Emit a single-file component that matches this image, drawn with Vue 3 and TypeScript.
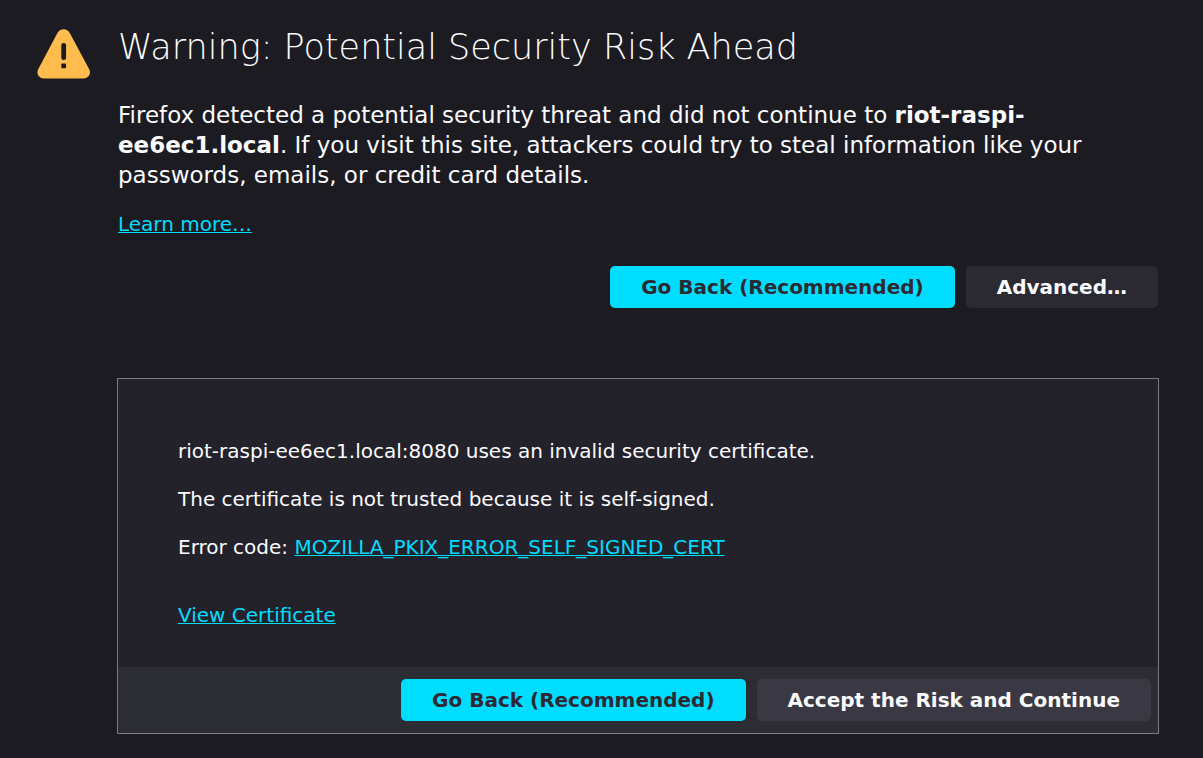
<script setup lang="ts">
const host = 'riot-raspi-ee6ec1.local'
const port = 8080
const errorCode = 'MOZILLA_PKIX_ERROR_SELF_SIGNED_CERT'
</script>

<template>
  <main class="page">
    <svg class="warning-icon" viewBox="0 0 54 50" aria-hidden="true">
      <path
        fill="#ffbd4f"
        d="M20.3 4.2C23 -1.2 30.2 -1.2 32.9 4.2L52.2 40.2C54.4 44.8 51.4 49.5 46.6 49.5H6.8C2 49.5 -1 44.8 1.2 40.2Z"
      />
      <rect x="24.3" y="14" width="4.8" height="17" rx="2.2" fill="#1c1b22" />
      <rect x="24.3" y="34.6" width="4.8" height="4.6" rx="1" fill="#1c1b22" />
    </svg>
    <div class="content">
      <h1>Warning: Potential Security Risk Ahead</h1>
      <p class="intro">
        Firefox detected a potential security threat and did not continue to <b>{{ host }}</b>. If you
        visit this site, attackers could try to steal information like your passwords, emails, or
        credit card details.
      </p>
      <p class="learn"><a href="#">Learn more…</a></p>
      <div class="buttons">
        <button type="button" class="primary">Go Back (Recommended)</button>
        <button type="button">Advanced…</button>
      </div>
      <section class="panel">
        <div class="details">
          <p>{{ host }}:{{ port }} uses an invalid security certificate.</p>
          <p>The certificate is not trusted because it is self-signed.</p>
          <p>Error code: <a href="#">{{ errorCode }}</a></p>
          <p class="certificate"><a href="#">View Certificate</a></p>
        </div>
        <div class="buttons panel-buttons">
          <button type="button" class="primary">Go Back (Recommended)</button>
          <button type="button">Accept the Risk and Continue</button>
        </div>
      </section>
    </div>
  </main>
</template>

<style>
body {
  background: #1c1b22;
}
</style>

<style scoped>
.page {
  display: flex;
  align-items: flex-start;
  gap: 26px;
  padding: 24px 44px 24px 37px;
  color: #fbfbfe;
  font: 20px/28px "DejaVu Sans", sans-serif;
}
.warning-icon {
  flex: none;
  width: 54px;
  height: 50px;
  margin-top: 5px;
}
.content {
  flex: 1;
  min-width: 0;
}
h1 {
  margin: 0 0 30px;
  padding-left: 1px;
  font-family: "DejaVu Sans Light", "DejaVu Sans", sans-serif;
  font-size: 35px;
  line-height: 46px;
  font-weight: 200;
}
p {
  margin: 0 0 20px;
}
.intro {
  margin: 0 0 20px;
  padding-left: 1px;
  font-size: 23px;
  line-height: 30px;
}
.learn {
  margin-bottom: 28px;
  padding-left: 1px;
}
a {
  color: #00ddff;
  text-decoration-thickness: 1px;
}
.buttons {
  display: flex;
  justify-content: flex-end;
  gap: 11px;
  padding-right: 1px;
}
button {
  min-height: 42px;
  padding: 0 31px;
  border: 0;
  border-radius: 5px;
  background: #2b2a33;
  color: #fbfbfe;
  font: bold 20px/28px "DejaVu Sans", sans-serif;
}
.primary {
  background: #00ddff;
  color: #2b2a33;
}
.panel {
  margin-top: 70px;
  border: 1px solid #7c7b82;
  background: #23222b;
}
.details {
  padding: 58px 60px 38px;
}
.details .certificate {
  margin: 40px 0 0;
}
.panel-buttons {
  padding: 12px 7px;
  background: #2c2c35;
}
.panel-buttons button:not(.primary) {
  background: #3a3943;
}
</style>
